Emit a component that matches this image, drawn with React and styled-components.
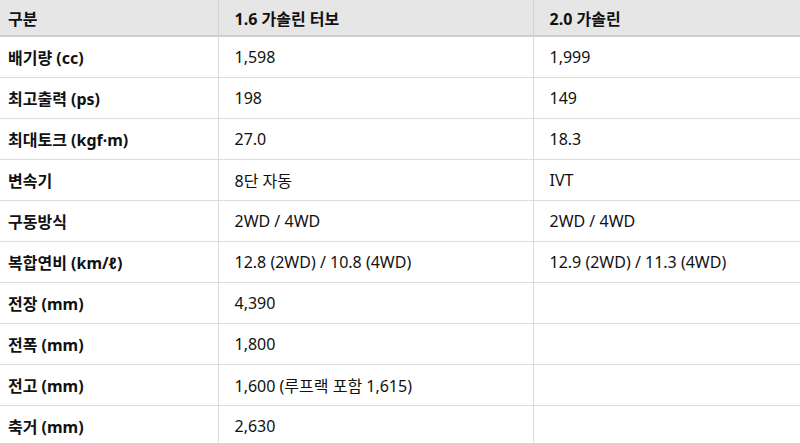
import styled, { createGlobalStyle } from 'styled-components';

const GlobalStyle = createGlobalStyle`
  body {
    margin: 0;
    background: #fff;
    font-family: "Noto Sans", "Noto Sans CJK KR", sans-serif;
    color: #111;
  }
`;

const Table = styled.table`
  width: 100%;
  border-collapse: collapse;
  font-size: 16px;
  table-layout: fixed;
`;

const HeadCell = styled.th`
  background: #e6e6e6;
  text-align: left;
  font-weight: 700;
  height: 36px;
  padding: 0 16px 0 ${(p) => (p.$first ? '8px' : '16px')};
  border-bottom: 2px solid #cfcfcf;
  border-left: ${(p) => (p.$first ? 'none' : '1px solid #d4d4d4')};
  box-sizing: border-box;
`;

const Cell = styled.td`
  height: 41px;
  padding: 0 16px 0 ${(p) => (p.$first ? '8px' : '16px')};
  font-weight: ${(p) => (p.$first ? 700 : 400)};
  border-bottom: 1px solid #dcdcdc;
  border-left: ${(p) => (p.$first ? 'none' : '1px solid #dcdcdc')};
  box-sizing: border-box;
  white-space: nowrap;
`;

const rows = [
  ['배기량 (cc)', '1,598', '1,999'],
  ['최고출력 (ps)', '198', '149'],
  ['최대토크 (kgf·m)', '27.0', '18.3'],
  ['변속기', '8단 자동', 'IVT'],
  ['구동방식', '2WD / 4WD', '2WD / 4WD'],
  ['복합연비 (km/ℓ)', '12.8 (2WD) / 10.8 (4WD)', '12.9 (2WD) / 11.3 (4WD)'],
  ['전장 (mm)', '4,390', ''],
  ['전폭 (mm)', '1,800', ''],
  ['전고 (mm)', '1,600 (루프랙 포함 1,615)', ''],
  ['축거 (mm)', '2,630', ''],
];

export default function App() {
  return (
    <>
      <GlobalStyle />
      <Table>
        <colgroup>
          <col style={{ width: 218 }} />
          <col style={{ width: 315 }} />
          <col />
        </colgroup>
        <thead>
          <tr>
            <HeadCell $first>구분</HeadCell>
            <HeadCell>1.6 가솔린 터보</HeadCell>
            <HeadCell>2.0 가솔린</HeadCell>
          </tr>
        </thead>
        <tbody>
          {rows.map((r) => (
            <tr key={r[0]}>
              <Cell $first>{r[0]}</Cell>
              <Cell>{r[1]}</Cell>
              <Cell>{r[2]}</Cell>
            </tr>
          ))}
        </tbody>
      </Table>
    </>
  );
}
